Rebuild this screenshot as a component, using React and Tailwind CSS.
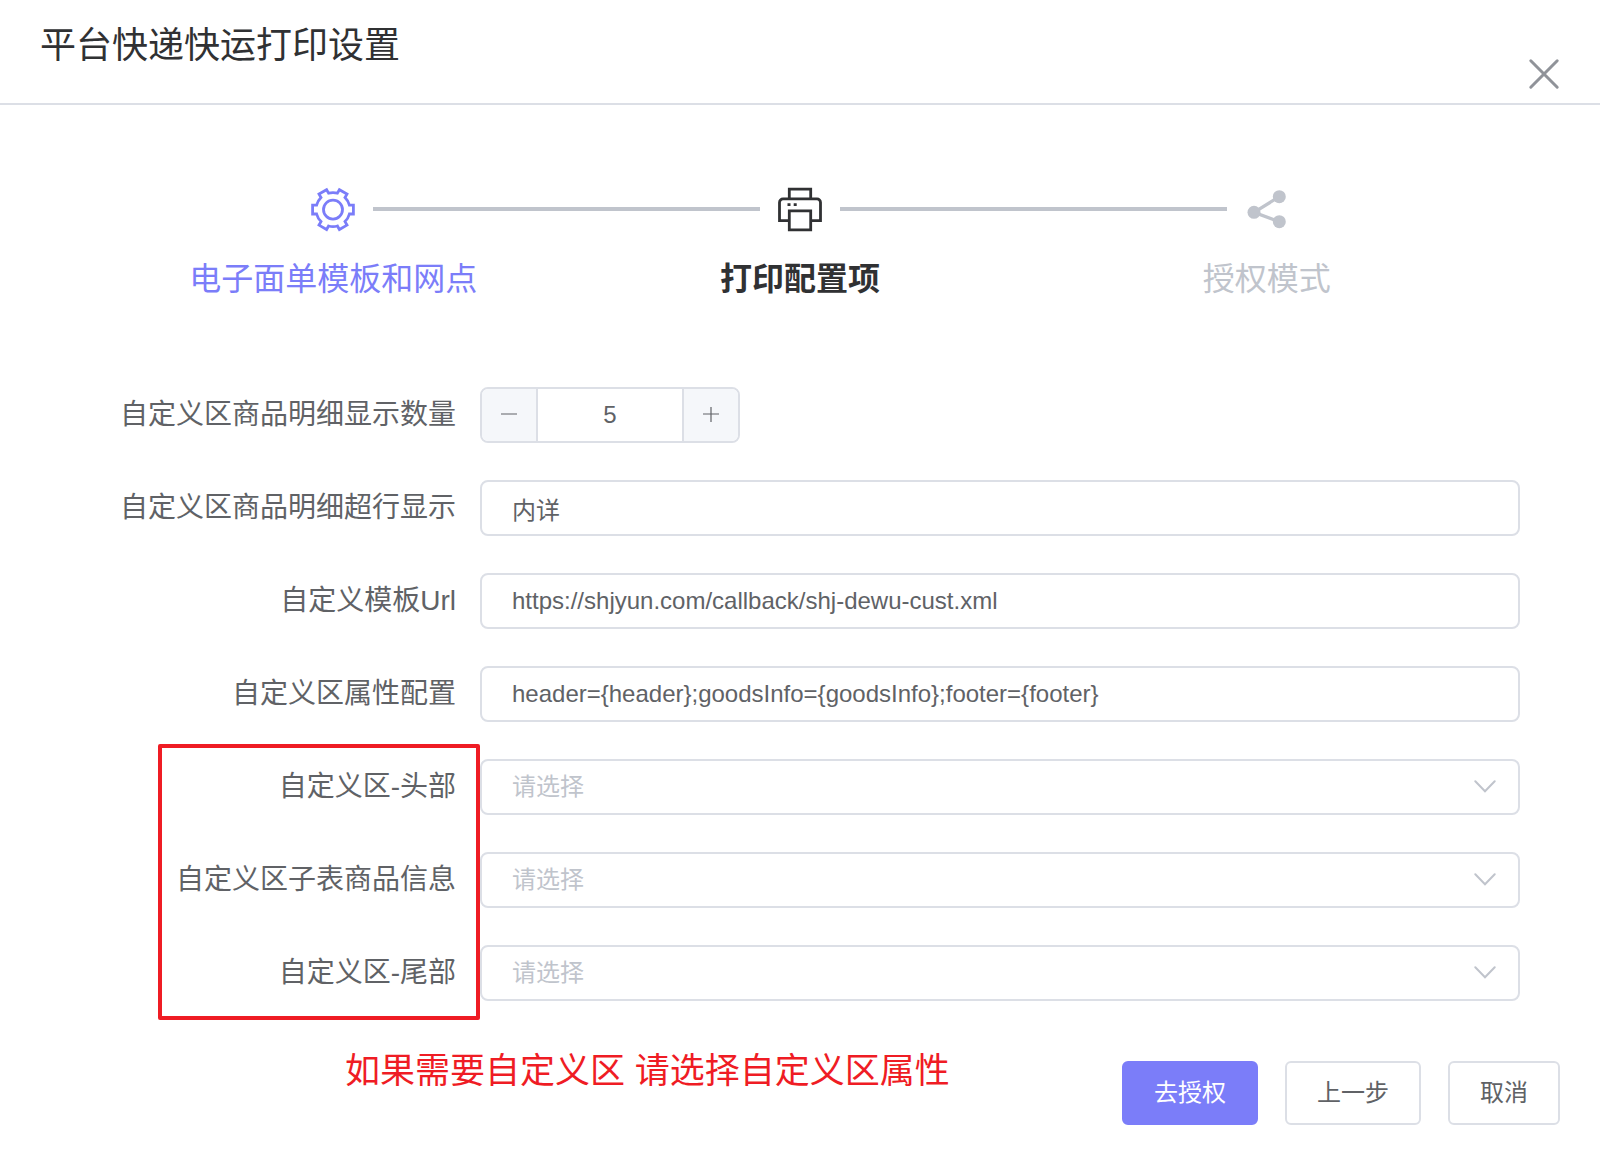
import { useState } from "react";

function GearIcon() {
  return (
    <svg viewBox="-25 -25.6 50 50" className="size-[50px]" fill="none" stroke="currentColor" strokeWidth="2.8" aria-hidden="true">
      <path d="M16.4-4.4H20.4V4.4H16.4A17 17 0 0 1 12 12L14 15.5 6.4 19.9 4.4 16.4A17 17 0 0 1-4.4 16.4L-6.4 19.9-14 15.5-12 12A17 17 0 0 1-16.4 4.4H-20.4V-4.4H-16.4A17 17 0 0 1-12-12L-14-15.5-6.4-19.9-4.4-16.4A17 17 0 0 1 4.4-16.4L6.4-19.9 14-15.5 12-12A17 17 0 0 1 16.4-4.4Z" />
      <circle r="9.5" />
    </svg>
  );
}

function PrinterIcon() {
  return (
    <svg viewBox="-25 -25.6 50 50" className="size-[50px]" fill="none" stroke="currentColor" strokeWidth="2.8" aria-hidden="true">
      <path d="M-10.7-11V-20.5H10.7V-11" />
      <path d="M-11 11H-20.5V-7.2A3.5 3.5 0 0 1-17-10.7H17A3.5 3.5 0 0 1 20.5-7.2V11H11" />
      <path d="M-10.7 1.3H10.7V20.2H-10.7Z" />
      <path d="M-12.5-5H-9.5M-6.3-5H-3.3" />
    </svg>
  );
}

function ShareIcon() {
  return (
    <svg viewBox="-25 -25 50 50" className="size-[50px]" aria-hidden="true">
      <path d="M12.3-12.3L-13 3.3 12.3 12.7" fill="none" stroke="currentColor" strokeWidth="3.3" />
      <g fill="currentColor">
        <circle cx="12.3" cy="-12.3" r="6.5" />
        <circle cx="-13" cy="3.3" r="6.5" />
        <circle cx="12.3" cy="12.7" r="6.5" />
      </g>
    </svg>
  );
}

const steps = [
  { title: "电子面单模板和网点", icon: GearIcon, tone: "text-[#7b7df9]" },
  { title: "打印配置项", icon: PrinterIcon, tone: "font-bold text-[#303133]" },
  { title: "授权模式", icon: ShareIcon, tone: "text-[#c0c4cc]" },
];

function Steps() {
  return (
    <ol className="mx-[100px] grid grid-cols-3">
      {steps.map(({ title, icon: Icon, tone }, i) => (
        <li key={title} className={"flex flex-col items-center " + tone}>
          <div className="flex w-full items-center">
            <span className={i > 0 ? "h-1 flex-1 bg-[#c0c4cc]" : "h-1 flex-1"} />
            <span className="flex w-20 justify-center">
              <Icon />
            </span>
            <span className={i < 2 ? "h-1 flex-1 bg-[#c0c4cc]" : "h-1 flex-1"} />
          </div>
          <span className="mt-[21px] text-[32px] leading-[48px]">{title}</span>
        </li>
      ))}
    </ol>
  );
}

function Row({ id, label, children }) {
  return (
    <div className="flex items-center">
      <label htmlFor={id} className="w-[480px] shrink-0 pr-6 text-right text-[28px] leading-[54px] text-[#606266]">
        {label}
      </label>
      <div className="min-w-0 flex-1">{children}</div>
    </div>
  );
}

const field =
  "block h-14 w-full rounded-lg border-2 border-[#dcdfe6] bg-white px-[30px] text-2xl outline-none";

function TextField({ id, label, initial, font = "" }) {
  return (
    <Row id={id} label={label}>
      <input id={id} type="text" defaultValue={initial} className={field + " text-[#606266] " + font} />
    </Row>
  );
}

function SelectField({ id, label }) {
  return (
    <Row id={id} label={label}>
      <div className="relative">
        <select id={id} defaultValue="" className={field + " appearance-none text-[#c0c4cc]"}>
          <option value="">请选择</option>
        </select>
        <svg viewBox="0 0 24 14" className="pointer-events-none absolute top-[21px] right-[23px] h-[14px] w-6" fill="none" stroke="#c0c4cc" strokeWidth="2" strokeLinecap="round" aria-hidden="true">
          <path d="M2.3 1.2L12 11.2 21.7 1.2" />
        </svg>
      </div>
    </Row>
  );
}

function CountField({ id, label }) {
  const [count, setCount] = useState(5);
  const stepButton = "flex w-[54px] shrink-0 items-center justify-center bg-[#f5f7fa] text-[#606266]";
  return (
    <Row id={id} label={label}>
      <div className="flex h-14 w-[260px] overflow-hidden rounded-lg border-2 border-[#dcdfe6]">
        <button type="button" aria-label="减少" className={stepButton} onClick={() => setCount(count - 1)}>
          <svg viewBox="0 0 16 16" className="size-4" stroke="currentColor" strokeWidth="1.2" aria-hidden="true">
            <path d="M0 7H16" />
          </svg>
        </button>
        <input
          id={id}
          type="text"
          inputMode="numeric"
          value={count}
          onChange={(e) => setCount(Number(e.target.value) || 0)}
          className="min-w-0 flex-1 border-x-2 border-[#dcdfe6] text-center text-2xl text-[#606266] outline-none"
        />
        <button type="button" aria-label="增加" className={stepButton} onClick={() => setCount(count + 1)}>
          <svg viewBox="0 0 16 16" className="size-4" stroke="currentColor" strokeWidth="1.2" aria-hidden="true">
            <path d="M0 7H16M8 0V15" />
          </svg>
        </button>
      </div>
    </Row>
  );
}

export default function App() {
  const button = "h-16 rounded-md border-2 px-[30px] text-2xl";
  return (
    <div className="min-h-screen bg-white font-['Liberation_Sans','Noto_Sans_CJK_SC',sans-serif]">
      <header className="flex items-start justify-between border-b-2 border-[#dcdfe6] px-10">
        <h1 className="pt-[22px] pb-[33px] text-4xl leading-[48px] text-[#303133]">平台快递快运打印设置</h1>
        <button type="button" aria-label="关闭" className="mt-[58px] text-[#909399]">
          <svg viewBox="0 0 32 32" className="size-8" fill="none" stroke="currentColor" strokeWidth="3" strokeLinecap="round" aria-hidden="true">
            <path d="M2.8 2.8L29.2 29.2M29.2 2.8L2.8 29.2" />
          </svg>
        </button>
      </header>

      <main className="pt-[79px]">
        <Steps />
        <form className="mt-[84px] flex flex-col gap-[37px] pr-20">
          <CountField id="count" label="自定义区商品明细显示数量" />
          <TextField id="overflow" label="自定义区商品明细超行显示" initial="内详" font="font-['Noto_Sans_CJK_SC',sans-serif]" />
          <TextField id="url" label="自定义模板Url" initial="https://shjyun.com/callback/shj-dewu-cust.xml" />
          <TextField id="props" label="自定义区属性配置" initial="header={header};goodsInfo={goodsInfo};footer={footer}" />
          <div className="relative flex flex-col gap-[37px]">
            <SelectField id="head" label="自定义区-头部" />
            <SelectField id="goods" label="自定义区子表商品信息" />
            <SelectField id="foot" label="自定义区-尾部" />
            <div className="pointer-events-none absolute -top-[15px] -bottom-[19px] left-[158px] w-[322px] rounded-xs border-4 border-[#ef1c24]" />
          </div>
        </form>
      </main>

      <footer className="mt-[50px] flex items-start justify-between pr-10 pb-8 pl-[345px]">
        <p className="text-[35px] leading-10 text-[#ef1c24]">如果需要自定义区 请选择自定义区属性</p>
        <div className="flex gap-[27px] pt-2.5">
          <button type="button" className={button + " border-[#7b7df9] bg-[#7b7df9] text-white"}>去授权</button>
          <button type="button" className={button + " border-[#dcdfe6] bg-white text-[#606266]"}>上一步</button>
          <button type="button" className={button + " border-[#dcdfe6] bg-white text-[#606266]"}>取消</button>
        </div>
      </footer>
    </div>
  );
}
